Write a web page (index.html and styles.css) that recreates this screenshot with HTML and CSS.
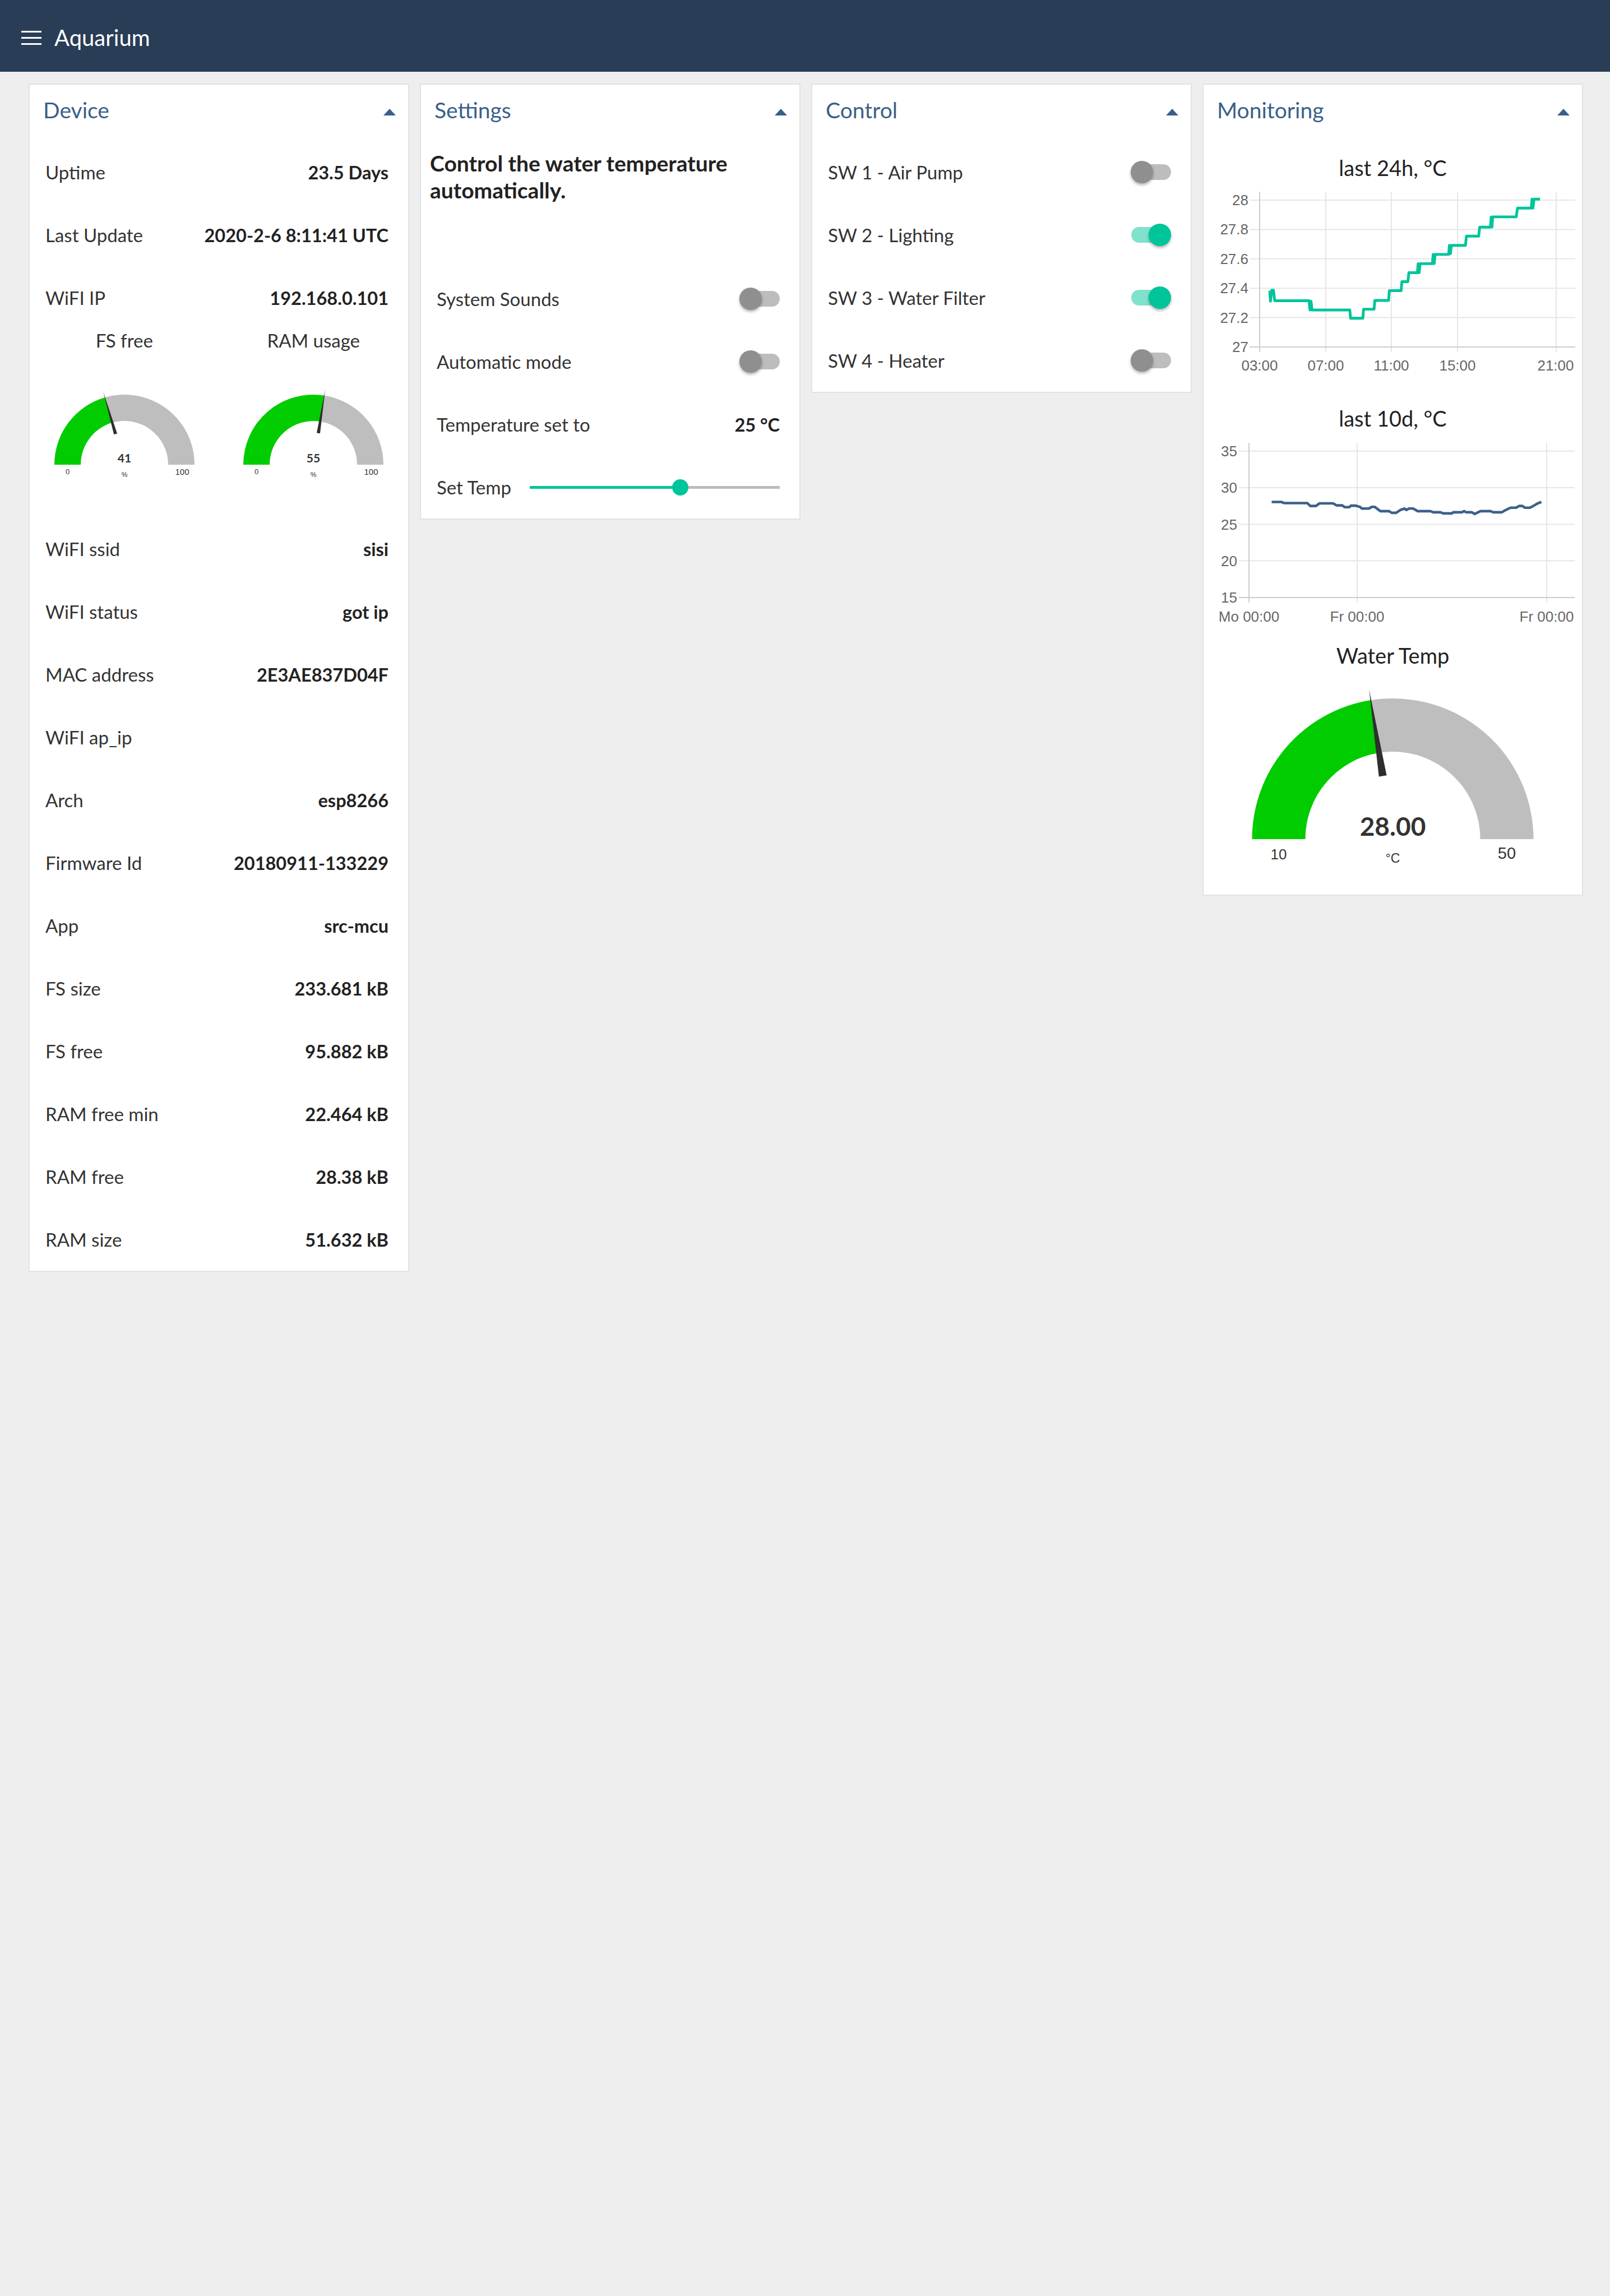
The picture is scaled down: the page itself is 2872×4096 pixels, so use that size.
FILE: index.html
```html
<!DOCTYPE html>
<html lang="en">
<head>
<meta charset="utf-8">
<title>Aquarium</title>
<link rel="stylesheet" href="styles.css">
</head>
<body>
<header class="topbar">
  <div class="menu"><span></span><span></span><span></span></div>
  <div class="app-title">Aquarium</div>
</header>

<main class="board">
  <!-- Device -->
  <section class="card">
    <div class="card-head">
      <div class="card-title">Device</div>
      <svg class="caret" viewBox="0 0 22 12"><polygon points="0,12 11,0 22,12"/></svg>
    </div>
    <div class="row"><span>Uptime</span><span class="val">23.5 Days</span></div>
    <div class="row"><span>Last Update</span><span class="val">2020-2-6 8:11:41 UTC</span></div>
    <div class="row"><span>WiFI IP</span><span class="val">192.168.0.101</span></div>
    <div class="gauges">
      <div class="gauge-col">
        <div class="gauge-label">FS free</div>
        <svg class="gauge-svg" viewBox="-168 -202 336 296">
          <path class="g-on" d="M -125 0 A 125 125 0 0 1 -34.88 -120.04 L -21.76 -74.90 A 78 78 0 0 0 -78 0 Z"/>
          <path class="g-off" d="M -34.88 -120.04 A 125 125 0 0 1 125 0 L 78 0 A 78 78 0 0 0 -21.76 -74.90 Z"/>
          <polygon class="needle" points="-13.02,-55.58 -37.94,-130.6 -18.78,-53.90"/>
          <text class="g-val-s" x="0" y="-4">41</text>
          <text class="g-min-s" x="-101.5" y="17">0</text>
          <text class="g-max-s" x="103" y="18">100</text>
          <text class="g-unit-s" x="0" y="22">%</text>
        </svg>
      </div>
      <div class="gauge-col">
        <div class="gauge-label">RAM usage</div>
        <svg class="gauge-svg" viewBox="-168 -202 336 296">
          <path class="g-on" d="M -125 0 A 125 125 0 0 1 19.55 -123.46 L 12.20 -77.04 A 78 78 0 0 0 -78 0 Z"/>
          <path class="g-off" d="M 19.55 -123.46 A 125 125 0 0 1 125 0 L 78 0 A 78 78 0 0 0 12.20 -77.04 Z"/>
          <polygon class="needle" points="11.88,-55.83 21.27,-134.33 5.95,-56.77"/>
          <text class="g-val-s" x="0" y="-4">55</text>
          <text class="g-min-s" x="-101.5" y="17">0</text>
          <text class="g-max-s" x="103" y="18">100</text>
          <text class="g-unit-s" x="0" y="22">%</text>
        </svg>
      </div>
    </div>
    <div class="row"><span>WiFI ssid</span><span class="val">sisi</span></div>
    <div class="row"><span>WiFI status</span><span class="val">got ip</span></div>
    <div class="row"><span>MAC address</span><span class="val">2E3AE837D04F</span></div>
    <div class="row"><span>WiFI ap_ip</span><span class="val"></span></div>
    <div class="row"><span>Arch</span><span class="val">esp8266</span></div>
    <div class="row"><span>Firmware Id</span><span class="val">20180911-133229</span></div>
    <div class="row"><span>App</span><span class="val">src-mcu</span></div>
    <div class="row"><span>FS size</span><span class="val">233.681 kB</span></div>
    <div class="row"><span>FS free</span><span class="val">95.882 kB</span></div>
    <div class="row"><span>RAM free min</span><span class="val">22.464 kB</span></div>
    <div class="row"><span>RAM free</span><span class="val">28.38 kB</span></div>
    <div class="row"><span>RAM size</span><span class="val">51.632 kB</span></div>
  </section>

  <!-- Settings -->
  <section class="card">
    <div class="card-head">
      <div class="card-title">Settings</div>
      <svg class="caret" viewBox="0 0 22 12"><polygon points="0,12 11,0 22,12"/></svg>
    </div>
    <p class="desc">Control the water temperature automatically.</p>
    <div class="row"><span>System Sounds</span><span class="switch"><span class="track"></span><span class="knob"></span></span></div>
    <div class="row"><span>Automatic mode</span><span class="switch"><span class="track"></span><span class="knob"></span></span></div>
    <div class="row"><span>Temperature set to</span><span class="val">25 °C</span></div>
    <div class="row"><span class="slider-label">Set Temp</span>
      <span class="slider"><span class="rail"></span><span class="fill"></span><span class="thumb"></span></span>
    </div>
  </section>

  <!-- Control -->
  <section class="card">
    <div class="card-head">
      <div class="card-title">Control</div>
      <svg class="caret" viewBox="0 0 22 12"><polygon points="0,12 11,0 22,12"/></svg>
    </div>
    <div class="row"><span>SW 1 - Air Pump</span><span class="switch"><span class="track"></span><span class="knob"></span></span></div>
    <div class="row"><span>SW 2 - Lighting</span><span class="switch on"><span class="track"></span><span class="knob"></span></span></div>
    <div class="row"><span>SW 3 - Water Filter</span><span class="switch on"><span class="track"></span><span class="knob"></span></span></div>
    <div class="row"><span>SW 4 - Heater</span><span class="switch"><span class="track"></span><span class="knob"></span></span></div>
  </section>

  <!-- Monitoring -->
  <section class="card">
    <div class="card-head">
      <div class="card-title">Monitoring</div>
      <svg class="caret" viewBox="0 0 22 12"><polygon points="0,12 11,0 22,12"/></svg>
    </div>
    <div class="chart-title first">last 24h, °C</div>
    <svg class="chart chart-24h" viewBox="2147 324 675 397">
      <g class="grid">
        <line x1="2229" y1="357" x2="2810" y2="357"/>
        <line x1="2229" y1="409.4" x2="2810" y2="409.4"/>
        <line x1="2229" y1="461.8" x2="2810" y2="461.8"/>
        <line x1="2229" y1="514.2" x2="2810" y2="514.2"/>
        <line x1="2229" y1="566.6" x2="2810" y2="566.6"/>
        <line x1="2365" y1="342" x2="2365" y2="628"/>
        <line x1="2482" y1="342" x2="2482" y2="628"/>
        <line x1="2600" y1="342" x2="2600" y2="628"/>
        <line x1="2776" y1="342" x2="2776" y2="628"/>
      </g>
      <g class="axis">
        <line x1="2229" y1="619" x2="2810" y2="619"/>
        <line x1="2247" y1="342" x2="2247" y2="628"/>
      </g>
      <g class="ylab">
        <text x="2227" y="366">28</text>
        <text x="2227" y="418.4">27.8</text>
        <text x="2227" y="470.8">27.6</text>
        <text x="2227" y="523.2">27.4</text>
        <text x="2227" y="575.6">27.2</text>
        <text x="2227" y="628">27</text>
      </g>
      <g class="xlab">
        <text x="2247" y="661">03:00</text>
        <text x="2365" y="661">07:00</text>
        <text x="2482" y="661">11:00</text>
        <text x="2600" y="661">15:00</text>
        <text x="2775" y="661">21:00</text>
      </g>
      <g transform="translate(2140 140) scale(0.446429)">
        <polyline class="line-24h" points="280,848 283,890 288,846 295,846 300,888 437,888 441,925 445,890 449,925 600,925 603,958 652,958 655,922 697,922 700,887 755,887 758,848 805,848 808,812 832,812 836,776 870,776 873,740 877,776 881,740 930,740 933,703 937,740 941,703 995,703 998,667 1002,700 1006,667 1062,667 1066,630 1115,630 1119,594 1162,594 1165,553 1168,594 1171,553 1265,553 1270,518 1325,518 1328,482 1332,518 1336,482 1360,482"/>
      </g>
    </svg>
    <div class="chart-title">last 10d, °C</div>
    <svg class="chart chart-10d" viewBox="2147 771 675 373">
      <g class="grid">
        <line x1="2210" y1="804.7" x2="2809" y2="804.7"/>
        <line x1="2210" y1="870" x2="2809" y2="870"/>
        <line x1="2210" y1="935.3" x2="2809" y2="935.3"/>
        <line x1="2210" y1="1000.6" x2="2809" y2="1000.6"/>
        <line x1="2421" y1="790" x2="2421" y2="1075"/>
        <line x1="2759" y1="790" x2="2759" y2="1075"/>
      </g>
      <g class="axis">
        <line x1="2210" y1="1066" x2="2809" y2="1066"/>
        <line x1="2228" y1="790" x2="2228" y2="1075"/>
      </g>
      <g class="ylab">
        <text x="2207" y="814">35</text>
        <text x="2207" y="879.3">30</text>
        <text x="2207" y="944.6">25</text>
        <text x="2207" y="1009.9">20</text>
        <text x="2207" y="1075.3">15</text>
      </g>
      <g class="xlab">
        <text x="2228" y="1109">Mo 00:00</text>
        <text x="2421" y="1109">Fr 00:00</text>
        <text x="2759" y="1109">Fr 00:00</text>
      </g>
      <g transform="translate(2072 820) scale(0.510204)">
        <polyline class="line-10d" points="385,148 420,148 428,152 510,152 520,162 540,162 552,153 600,153 612,160 632,160 640,166 656,166 662,161 680,161 695,166 700,171 725,171 735,165 745,165 765,180 795,180 805,186 820,186 835,176 850,171 856,176 865,171 880,171 895,180 940,180 950,184 975,184 985,188 1015,188 1020,184 1050,184 1058,180 1065,184 1085,184 1095,190 1103,186 1115,180 1150,180 1160,184 1190,184 1200,178 1220,168 1240,168 1250,162 1262,162 1270,168 1288,168 1300,162 1315,153 1328,148"/>
      </g>
    </svg>
    <div class="chart-title">Water Temp</div>
    <svg class="big-gauge" viewBox="-337.5 -303 675 402">
      <path class="g-on" d="M -251 0 A 251 251 0 0 1 -39.26 -247.9 L -24.40 -154.08 A 156 156 0 0 0 -156 0 Z"/>
      <path class="g-off" d="M -39.26 -247.9 A 251 251 0 0 1 251 0 L 156 0 A 156 156 0 0 0 -24.40 -154.08 Z"/>
      <polygon class="needle" points="-10.92,-113.7 -42.23,-266.7 -24.74,-111.5"/>
      <text class="g-val-b" x="0" y="-6">28.00</text>
      <text class="g-min-b" x="-203.5" y="36">10</text>
      <text class="g-max-b" x="203.5" y="35">50</text>
      <text class="g-unit-b" x="0" y="42">°C</text>
    </svg>
  </section>
</main>
</body>
</html>
```

FILE: styles.css
```css
* { box-sizing: border-box; }
html, body { margin: 0; padding: 0; }
body {
  background: #eeeeee;
  font-family: Lato, "Noto Sans", sans-serif;
  color: #333333;
  min-height: 4096px;
}

/* top bar */
.topbar {
  height: 128px;
  background: #293d56;
  display: flex;
  align-items: center;
  padding: 6px 0 0 38px;
  color: #ffffff;
}
.menu {
  width: 36px;
  height: 25px;
  display: flex;
  flex-direction: column;
  justify-content: space-between;
  margin-right: 23px;
}
.menu span { display: block; height: 3px; background: #ffffff; }
.app-title { font-size: 40px; line-height: 1; }

/* board */
.board {
  display: grid;
  grid-template-columns: repeat(4, 679px);
  column-gap: 19px;
  padding: 21px 0 0 51px;
  align-items: start;
}
.card {
  background: #ffffff;
  border: 2px solid #e2e2e2;
}
.card-head {
  height: 100px;
  padding: 0 22px 10px 24px;
  display: flex;
  align-items: center;
  justify-content: space-between;
}
.card-title { font-size: 39px; color: #3a5f8a; line-height: 1.2; }
.caret { width: 22px; height: 12px; margin-top: 8px; fill: #3a5f8a; }

.row {
  height: 112px;
  display: flex;
  align-items: center;
  justify-content: space-between;
  padding: 0 35px 0 28px;
  font-size: 33px;
  color: #333333;
}
.row .val { font-weight: 700; color: #222222; font-size: 32.5px; }

/* device gauges */
.gauges {
  display: grid;
  grid-template-columns: 1fr 1fr;
  height: 336px;
}
.gauge-col { display: flex; flex-direction: column; align-items: center; }
.gauge-label { font-size: 33px; line-height: 40px; height: 40px; color: #333333; }
.gauge-svg { display: block; width: 336px; height: 296px; }

.g-on { fill: #00cc00; }
.g-off { fill: #bebebe; }
.needle { fill: #2e2e2e; }
.gauge-svg text, .big-gauge text { text-anchor: middle; fill: #333333; }
.g-val-s { font-family: Lato, sans-serif; font-weight: 700; font-size: 21px; }
.g-min-s { font-family: "Liberation Sans", Arial, sans-serif; font-size: 13px; }
.g-max-s { font-family: "Liberation Sans", Arial, sans-serif; font-size: 15px; }
.g-unit-s { font-family: "Liberation Sans", Arial, sans-serif; font-size: 12px; }
.g-val-b { font-family: Lato, sans-serif; font-weight: 700; font-size: 46px; }
.g-min-b { font-family: "Liberation Sans", Arial, sans-serif; font-size: 26px; }
.g-max-b { font-family: "Liberation Sans", Arial, sans-serif; font-size: 29px; }
.g-unit-b { font-family: "Liberation Sans", Arial, sans-serif; font-size: 23px; }

/* settings */
.desc {
  margin: 16px 0 114px;
  padding: 0 16px 0 16px;
  font-size: 39px;
  line-height: 48px;
  font-weight: 700;
  color: #222222;
}

.switch {
  position: relative;
  display: block;
  width: 71px;
  height: 40px;
  flex: none;
}
.switch .track {
  position: absolute;
  left: 0;
  right: 0;
  top: 6px;
  height: 28px;
  border-radius: 14px;
  background: #bdbdbd;
}
.switch .knob {
  position: absolute;
  top: 0;
  left: -1px;
  width: 40px;
  height: 40px;
  border-radius: 50%;
  background: #8f8f8f;
  box-shadow: 0 3px 5px rgba(0, 0, 0, 0.3);
}
.switch.on .track { background: #80e1cc; }
.switch.on .knob { left: auto; right: 0; background: #00c49a; }

.slider-label { width: 166px; flex: none; }
.slider {
  position: relative;
  display: block;
  flex: 1;
  height: 29px;
}
.slider .rail {
  position: absolute;
  left: 0;
  right: 0;
  top: 12px;
  height: 5px;
  background: #bdbdbd;
}
.slider .fill {
  position: absolute;
  left: 0;
  width: 60.2%;
  top: 12px;
  height: 5px;
  background: #00c49a;
}
.slider .thumb {
  position: absolute;
  left: 60.2%;
  top: 0;
  width: 29px;
  height: 29px;
  margin-left: -14.5px;
  border-radius: 50%;
  background: #00c49a;
}

/* monitoring */
.chart-title {
  font-size: 38px;
  line-height: 50px;
  height: 50px;
  text-align: center;
  color: #222222;
}
.chart-title.first { margin-top: 23px; }
.chart { display: block; width: 675px; }
.chart-24h { height: 397px; }
.chart-10d { height: 373px; }
.grid line { stroke: #e6e6e6; stroke-width: 2; }
.axis line { stroke: #cdcdcd; stroke-width: 2; }
.ylab text, .xlab text {
  font-family: "Liberation Sans", Arial, sans-serif;
  font-size: 26px;
  fill: #666666;
}
.ylab text { text-anchor: end; }
.xlab text { text-anchor: middle; }
.line-24h { fill: none; stroke: #00c49a; stroke-width: 11; stroke-linejoin: round; }
.line-10d { fill: none; stroke: #3d6089; stroke-width: 9; stroke-linejoin: round; }
.big-gauge { display: block; width: 675px; height: 402px; }
```
